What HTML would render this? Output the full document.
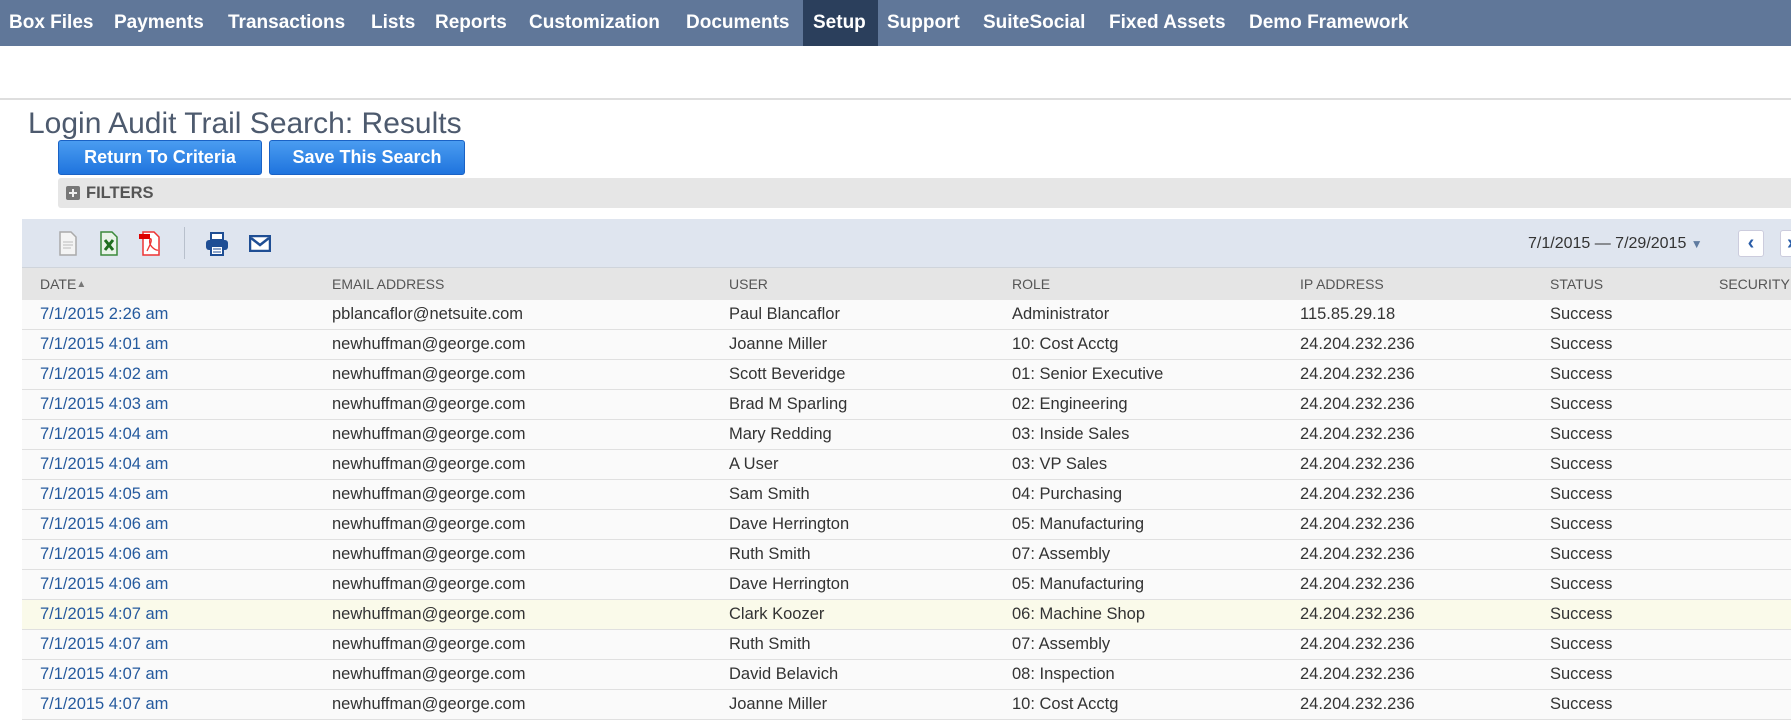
<!DOCTYPE html>
<html><head><meta charset="utf-8"><style>
*{margin:0;padding:0;box-sizing:border-box}
body{width:1791px;height:718px;overflow:hidden;background:#fff;font-family:"Liberation Sans",Arial,sans-serif;position:relative}
.nav{position:absolute;left:0;top:0;width:1791px;height:46px;background:#607799}
.nav span{position:absolute;top:0;height:46px;line-height:46px;color:#fff;font-weight:bold;font-size:19px;white-space:nowrap}
.nav .act{background:#2b3f5c;padding:0 10px}
.line{position:absolute;left:0;top:98px;width:1791px;height:2px;background:#dedede}
h1{position:absolute;left:28px;top:107px;font-weight:normal;font-size:30px;color:#4d5a6e;white-space:nowrap}
.btn{position:absolute;top:140px;height:35px;border:1px solid #1a62c5;border-radius:3px;background:linear-gradient(#4a9cf0,#1f74de);color:#fff;font-weight:bold;font-size:18px;line-height:33px;text-align:center}
.filters{position:absolute;left:58px;top:178px;width:1733px;height:30px;background:#e6e6e6;border-radius:3px 0 0 3px}
.filters b{position:absolute;left:28px;top:0;line-height:30px;font-size:16.5px;color:#555}
.filters i{position:absolute;left:8px;top:8px;width:14px;height:14px;background:#777;border-radius:2px}
.filters i:before{content:"";position:absolute;left:3px;top:6px;width:8px;height:2px;background:#eee}
.filters i:after{content:"";position:absolute;left:6px;top:3px;width:2px;height:8px;background:#eee}
.tool{position:absolute;left:22px;top:219px;width:1769px;height:48px;background:#dfe5ef}
.hdr{position:absolute;left:22px;top:267px;width:1769px;height:33px;background:#e5e5e5;border-top:1px solid #cfd4db}
.hdr span{position:absolute;top:0;line-height:33px;font-size:14px;color:#555}
.row{position:absolute;left:22px;width:1769px;height:30px;border-bottom:1px solid #e0e0e0;background:#fafafa}
.row span{position:absolute;top:0;line-height:29px;font-size:16.5px;color:#333;white-space:nowrap}
.row span.d{color:#255a9e}
.hl{background:#fafaea}
.c1{left:18px}.c2{left:310px}.c3{left:707px}.c4{left:990px}.c5{left:1278px}.c6{left:1528px}.c7{left:1697px}
.arr{position:absolute;top:230px;width:26px;height:27px;background:#fff;border:1px solid #ccd;border-radius:3px;color:#2a5da8;font-weight:bold;font-size:20px;text-align:center;line-height:24px}
</style></head><body>
<div class="nav">
<span style="left:9px">Box Files</span>
<span style="left:114px">Payments</span>
<span style="left:228px">Transactions</span>
<span style="left:371px">Lists</span>
<span style="left:435px">Reports</span>
<span style="left:529px">Customization</span>
<span style="left:686px">Documents</span>
<span class="act" style="left:803px;width:75px">Setup</span>
<span style="left:887px">Support</span>
<span style="left:983px">SuiteSocial</span>
<span style="left:1109px">Fixed Assets</span>
<span style="left:1249px">Demo Framework</span>
</div>
<div class="line"></div>
<h1>Login Audit Trail Search: Results</h1>
<div class="btn" style="left:58px;width:204px">Return To Criteria</div>
<div class="btn" style="left:269px;width:196px">Save This Search</div>
<div class="filters"><i></i><b>FILTERS</b></div>
<div class="tool">
<svg style="position:absolute;left:36px;top:12px" width="20" height="25" viewBox="0 0 20 25"><path d="M2 1h11l5 5v18H2z" fill="#f4f4f4" stroke="#aaa" stroke-width="1.5"/><path d="M5 11h10M5 14h10M5 17h8" stroke="#bbb"/></svg>
<svg style="position:absolute;left:77px;top:12px" width="20" height="25" viewBox="0 0 20 25"><path d="M2 1h11l5 5v18H2z" fill="#e9f3e9" stroke="#3b8a3b" stroke-width="1.5"/><path d="M6 9l8 10M14 9l-8 10" stroke="#1f6e1f" stroke-width="3"/></svg>
<svg style="position:absolute;left:117px;top:12px" width="22" height="25" viewBox="0 0 22 25"><path d="M4 1h11l5 5v18H4z" fill="#fff" stroke="#e33" stroke-width="1.5"/><rect x="0" y="3" width="11" height="5" fill="#d00"/><path d="M8 20c3-6 5-10 4-12s-3 4 1 8 6 3 6 3" stroke="#e33" fill="none" stroke-width="1.3"/></svg>
<div style="position:absolute;left:162px;top:8px;width:1px;height:32px;background:#b8c0cc"></div>
<svg style="position:absolute;left:183px;top:13px" width="24" height="24" viewBox="0 0 24 24"><rect x="6" y="1" width="12" height="7" fill="#fff" stroke="#1f4e94" stroke-width="2"/><rect x="1" y="8" width="22" height="10" rx="3" fill="#1f4e94"/><rect x="6" y="14" width="12" height="9" fill="#fff" stroke="#1f4e94" stroke-width="2"/><path d="M8 17h8M8 20h8" stroke="#1f4e94"/></svg>
<svg style="position:absolute;left:227px;top:16px" width="22" height="17" viewBox="0 0 22 17"><rect x="1" y="1" width="20" height="15" fill="#fff" stroke="#1f4e94" stroke-width="2.5"/><path d="M2 3l9 7 9-7" stroke="#1f4e94" stroke-width="2.5" fill="none"/></svg>
<span style="position:absolute;left:1506px;top:0;line-height:50px;font-size:16px;color:#333">7/1/2015 — 7/29/2015 <span style="color:#5f7ba0;font-size:12px">▼</span></span>
</div>
<div class="arr" style="left:1738px">‹</div>
<div class="arr" style="left:1780px;text-align:left;padding-left:6px">›</div>
<div class="hdr">
<span class="c1">DATE <span style="font-size:10px;color:#777">▲</span></span><span class="c2">EMAIL ADDRESS</span><span class="c3">USER</span><span class="c4">ROLE</span><span class="c5">IP ADDRESS</span><span class="c6">STATUS</span><span class="c7">SECURITY</span>
</div>
<div class="row" style="top:300px"><span class="c1 d">7/1/2015 2:26 am</span><span class="c2">pblancaflor@netsuite.com</span><span class="c3">Paul Blancaflor</span><span class="c4">Administrator</span><span class="c5">115.85.29.18</span><span class="c6">Success</span></div>
<div class="row" style="top:330px"><span class="c1 d">7/1/2015 4:01 am</span><span class="c2">newhuffman@george.com</span><span class="c3">Joanne Miller</span><span class="c4">10: Cost Acctg</span><span class="c5">24.204.232.236</span><span class="c6">Success</span></div>
<div class="row" style="top:360px"><span class="c1 d">7/1/2015 4:02 am</span><span class="c2">newhuffman@george.com</span><span class="c3">Scott Beveridge</span><span class="c4">01: Senior Executive</span><span class="c5">24.204.232.236</span><span class="c6">Success</span></div>
<div class="row" style="top:390px"><span class="c1 d">7/1/2015 4:03 am</span><span class="c2">newhuffman@george.com</span><span class="c3">Brad M Sparling</span><span class="c4">02: Engineering</span><span class="c5">24.204.232.236</span><span class="c6">Success</span></div>
<div class="row" style="top:420px"><span class="c1 d">7/1/2015 4:04 am</span><span class="c2">newhuffman@george.com</span><span class="c3">Mary Redding</span><span class="c4">03: Inside Sales</span><span class="c5">24.204.232.236</span><span class="c6">Success</span></div>
<div class="row" style="top:450px"><span class="c1 d">7/1/2015 4:04 am</span><span class="c2">newhuffman@george.com</span><span class="c3">A User</span><span class="c4">03: VP Sales</span><span class="c5">24.204.232.236</span><span class="c6">Success</span></div>
<div class="row" style="top:480px"><span class="c1 d">7/1/2015 4:05 am</span><span class="c2">newhuffman@george.com</span><span class="c3">Sam Smith</span><span class="c4">04: Purchasing</span><span class="c5">24.204.232.236</span><span class="c6">Success</span></div>
<div class="row" style="top:510px"><span class="c1 d">7/1/2015 4:06 am</span><span class="c2">newhuffman@george.com</span><span class="c3">Dave Herrington</span><span class="c4">05: Manufacturing</span><span class="c5">24.204.232.236</span><span class="c6">Success</span></div>
<div class="row" style="top:540px"><span class="c1 d">7/1/2015 4:06 am</span><span class="c2">newhuffman@george.com</span><span class="c3">Ruth Smith</span><span class="c4">07: Assembly</span><span class="c5">24.204.232.236</span><span class="c6">Success</span></div>
<div class="row" style="top:570px"><span class="c1 d">7/1/2015 4:06 am</span><span class="c2">newhuffman@george.com</span><span class="c3">Dave Herrington</span><span class="c4">05: Manufacturing</span><span class="c5">24.204.232.236</span><span class="c6">Success</span></div>
<div class="row hl" style="top:600px"><span class="c1 d">7/1/2015 4:07 am</span><span class="c2">newhuffman@george.com</span><span class="c3">Clark Koozer</span><span class="c4">06: Machine Shop</span><span class="c5">24.204.232.236</span><span class="c6">Success</span></div>
<div class="row" style="top:630px"><span class="c1 d">7/1/2015 4:07 am</span><span class="c2">newhuffman@george.com</span><span class="c3">Ruth Smith</span><span class="c4">07: Assembly</span><span class="c5">24.204.232.236</span><span class="c6">Success</span></div>
<div class="row" style="top:660px"><span class="c1 d">7/1/2015 4:07 am</span><span class="c2">newhuffman@george.com</span><span class="c3">David Belavich</span><span class="c4">08: Inspection</span><span class="c5">24.204.232.236</span><span class="c6">Success</span></div>
<div class="row" style="top:690px"><span class="c1 d">7/1/2015 4:07 am</span><span class="c2">newhuffman@george.com</span><span class="c3">Joanne Miller</span><span class="c4">10: Cost Acctg</span><span class="c5">24.204.232.236</span><span class="c6">Success</span></div>
</body></html>
